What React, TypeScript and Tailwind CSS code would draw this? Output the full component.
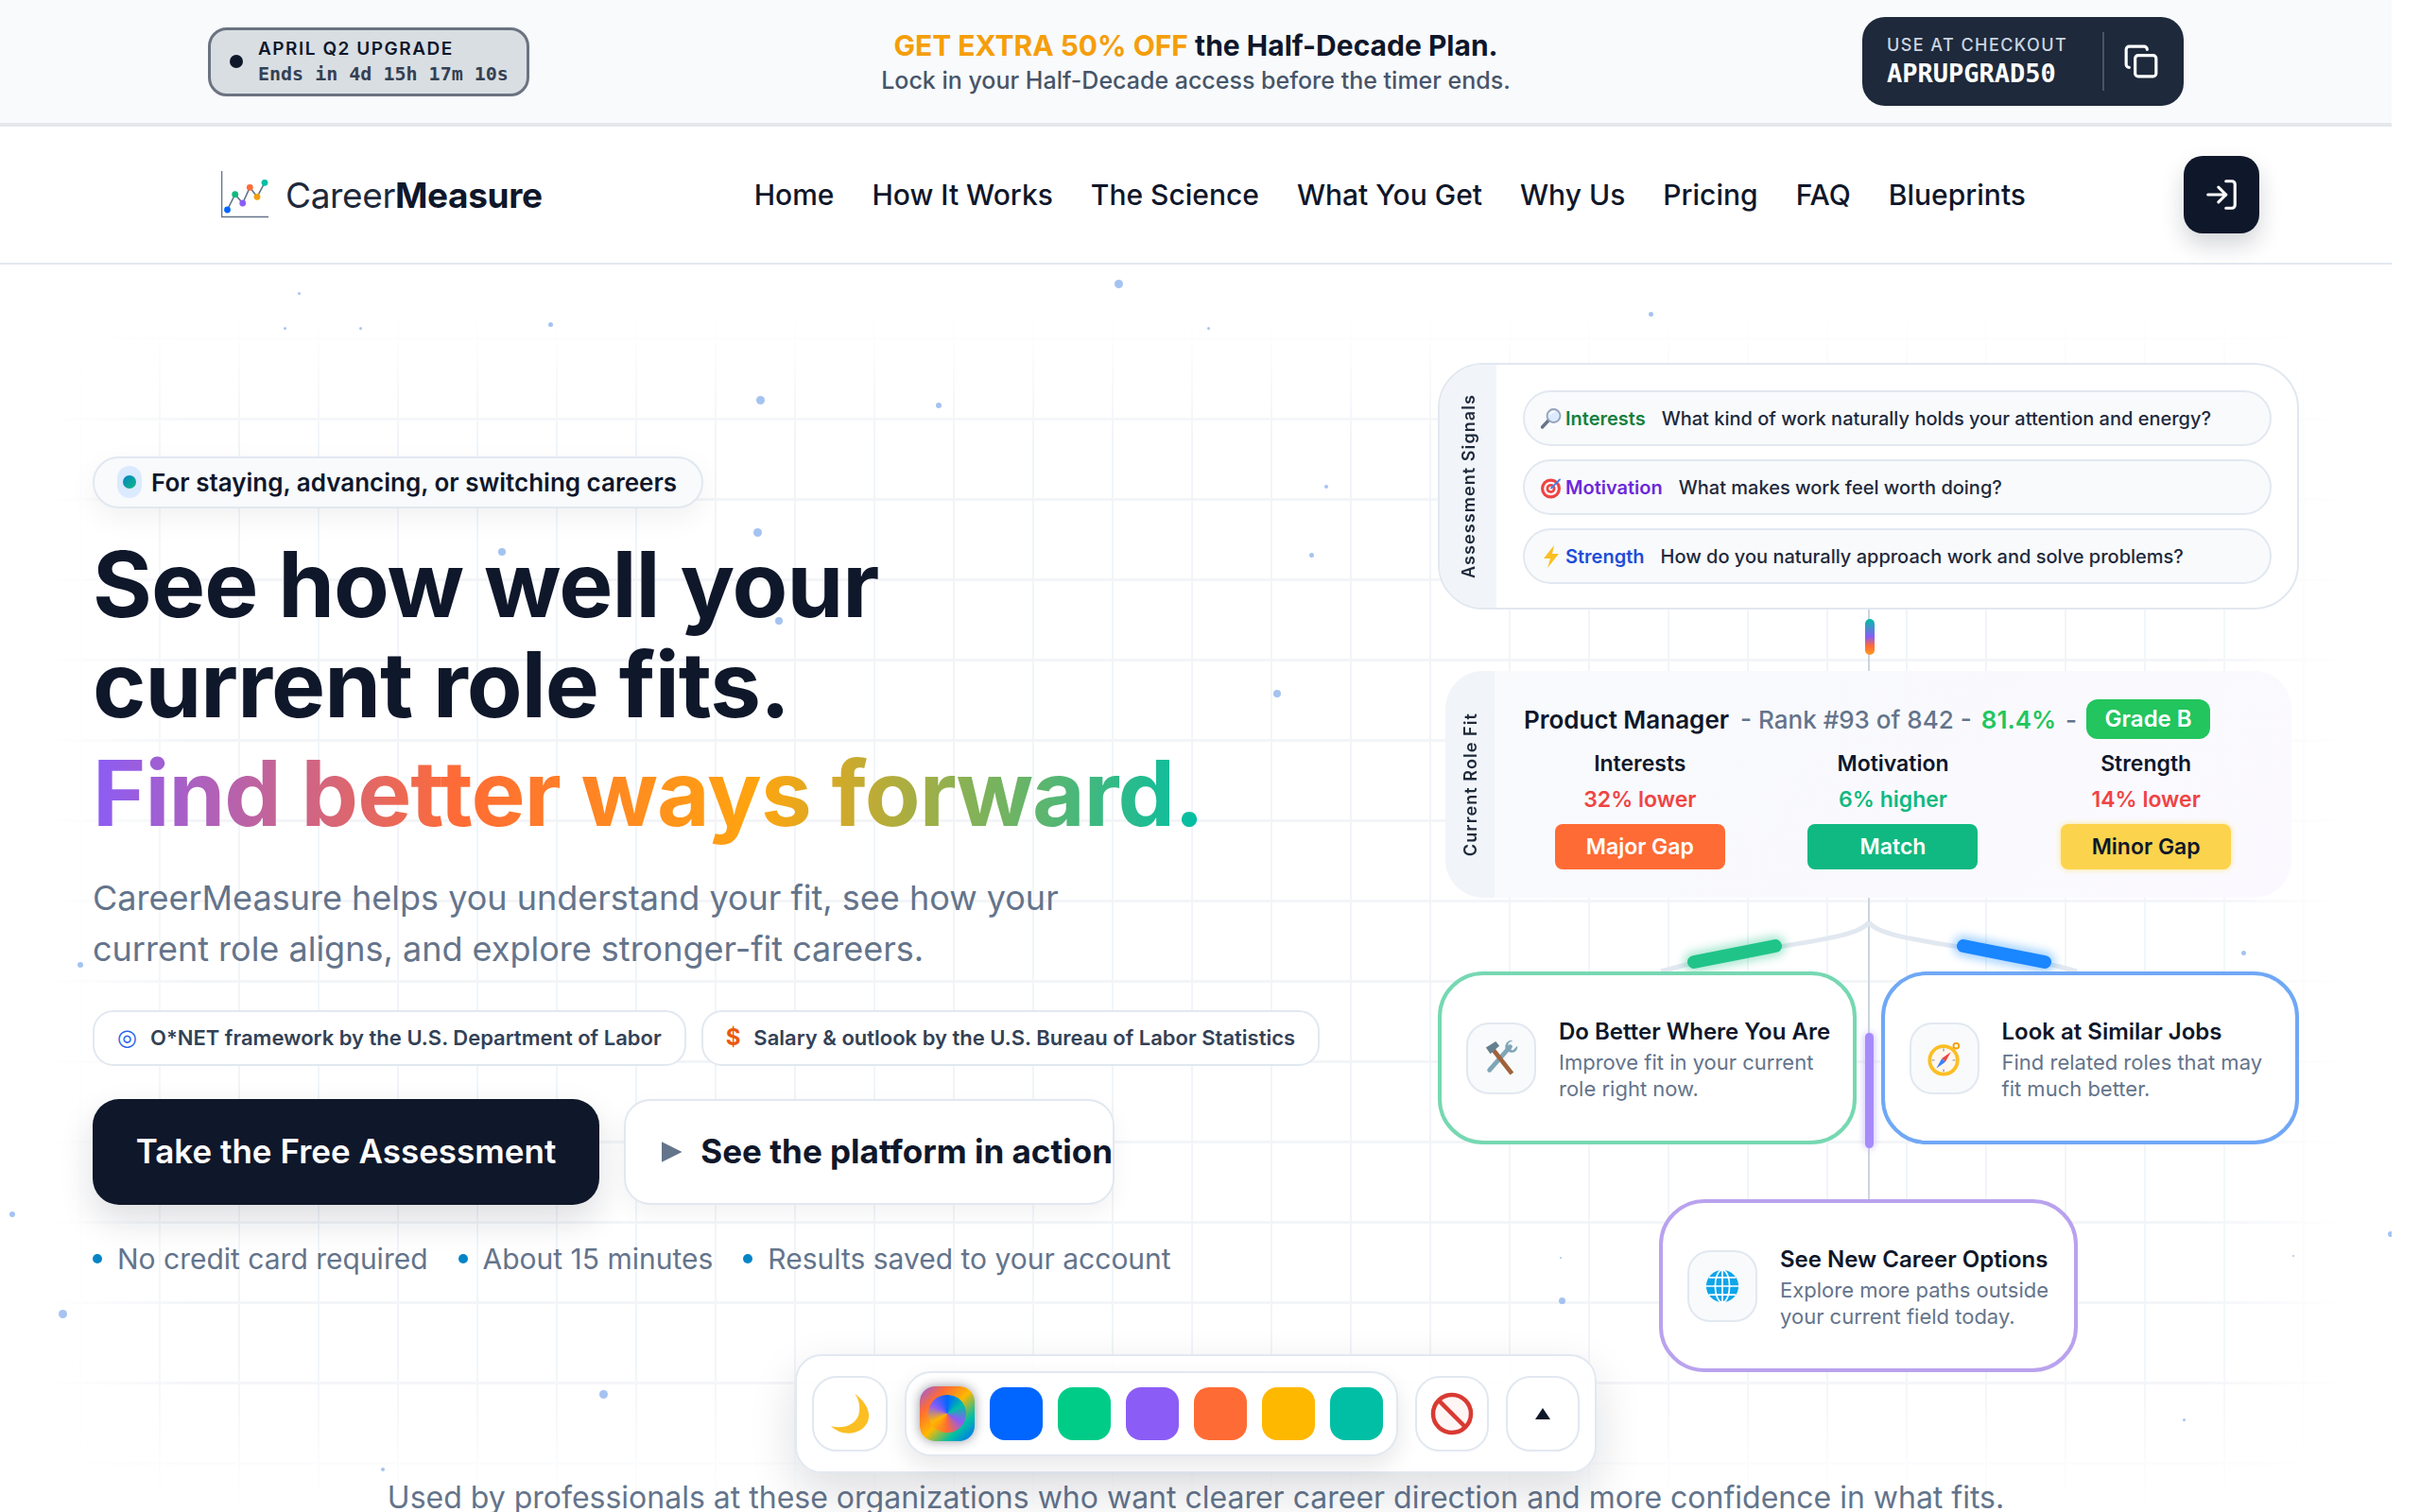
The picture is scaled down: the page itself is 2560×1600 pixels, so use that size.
import React from 'react';
import { Copy, LogIn } from 'lucide-react';

const navLinks = ['Home', 'How It Works', 'The Science', 'What You Get', 'Why Us', 'Pricing', 'FAQ', 'Blueprints'];

const particles = [
  [1179, 296, 9], [800, 419, 9], [990, 426, 6], [580, 341, 5], [797, 559, 9], [527, 580, 8], [1385, 585, 5],
  [1401, 513, 4], [1347, 730, 8], [82, 1018, 6], [820, 653, 8], [10, 1282, 6], [62, 1386, 9], [634, 1471, 9],
  [1744, 330, 5], [1277, 346, 3], [315, 309, 3], [300, 346, 3], [380, 346, 3], [2371, 1006, 5], [2309, 1501, 3],
  [2425, 1328, 2], [1649, 1373, 7], [2526, 1303, 6], [403, 1553, 4], [1650, 1330, 2],
];

const MagnifierIcon = () => (
  <svg viewBox="0 0 24 24" className="w-[24px] h-[24px] shrink-0">
    <path d="M9 14 L2.5 21" stroke="#64748b" strokeWidth="3.4" strokeLinecap="round" />
    <circle cx="14.5" cy="9" r="7" fill="#dbeafe" stroke="#94a3b8" strokeWidth="1.8" />
    <path d="M11 7 Q12.5 4.6 15.5 4.5" stroke="#ffffff" strokeWidth="1.6" fill="none" strokeLinecap="round" />
  </svg>
);

const TargetIcon = () => (
  <svg viewBox="0 0 24 24" className="w-[24px] h-[24px] shrink-0">
    <circle cx="11.5" cy="13" r="10.5" fill="#ef4444" />
    <circle cx="11.5" cy="13" r="7.3" fill="#ffffff" />
    <circle cx="11.5" cy="13" r="5" fill="#ef4444" />
    <circle cx="11.5" cy="13" r="2.2" fill="#ffffff" />
    <path d="M12 12.5 L21 3.5" stroke="#3b82f6" strokeWidth="1.8" strokeLinecap="round" />
  </svg>
);

const BoltIcon = () => (
  <svg viewBox="0 0 24 24" className="w-[24px] h-[24px] shrink-0">
    <path d="M15 0 L4 14 H11 L8 24 L20 9 H13 Z" fill="#fbbf24" />
  </svg>
);

const ToolsIcon = () => (
  <svg viewBox="0 0 40 40" className="w-[38px] h-[38px]">
    <path d="M30 7 L7 33" stroke="#7fa6b8" strokeWidth="5" strokeLinecap="round" />
    <path d="M38 6 L33 11 L28 9 L28 3 L33 0 C28 -1 23 4 25 10 L29 13 C34 15 39 11 38 6 Z" fill="#7fa6b8" />
    <path d="M10 9 L32 37" stroke="#a0623a" strokeWidth="5" strokeLinecap="butt" />
    <path d="M3 8 L14 1 L18 6 L8 15 Z" fill="#64808f" />
  </svg>
);

const CompassIcon = () => (
  <svg viewBox="0 0 40 40" className="w-[38px] h-[38px]">
    <circle cx="33" cy="6" r="3" fill="none" stroke="#f59e0b" strokeWidth="2" />
    <circle cx="19" cy="22" r="15.5" fill="#fff7ed" stroke="#fbbf24" strokeWidth="4" />
    <path d="M27 13 L21 24 L17 20 Z" fill="#ef4444" />
    <path d="M11 31 L17 20 L21 24 Z" fill="#3b82f6" />
    <path d="M19 9 V12 M19 32 V35 M6 22 H9 M29 22 H32" stroke="#94a3b8" strokeWidth="1.5" />
  </svg>
);

const GlobeIcon = () => (
  <svg viewBox="0 0 40 40" className="w-[38px] h-[38px]">
    <circle cx="20" cy="20" r="18" fill="#0ea5e9" />
    <g stroke="#ffffff" strokeWidth="1.8" fill="none">
      <ellipse cx="20" cy="20" rx="8" ry="18" />
      <path d="M20 2 V38 M2 20 H38 M5 10.5 H35 M5 29.5 H35" />
    </g>
  </svg>
);

const MoonIcon = () => (
  <svg viewBox="0 0 44 44" className="w-[45px] h-[43px]">
    <path d="M27 0 C38 8 46 20 40 32 C33 44 14 47 1 35 C14 38 27 34 31 23 C33 15 32 7 27 0 Z" fill="#fbbf24" />
  </svg>
);

const NoEntryIcon = () => (
  <svg viewBox="0 0 46 46" className="w-[46px] h-[46px]">
    <circle cx="23" cy="23" r="20" fill="#fff5f5" stroke="#d93a32" strokeWidth="4.5" />
    <path d="M9 9 L37 37" stroke="#d93a32" strokeWidth="4.5" />
  </svg>
);

const signals = [
  { icon: <MagnifierIcon />, label: 'Interests', color: 'text-[#15803d]', text: 'What kind of work naturally holds your attention and energy?' },
  { icon: <TargetIcon />, label: 'Motivation', color: 'text-[#6d28d9]', text: 'What makes work feel worth doing?' },
  { icon: <BoltIcon />, label: 'Strength', color: 'text-[#1d4ed8]', text: 'How do you naturally approach work and solve problems?' },
];

const fitColumns = [
  { title: 'Interests', delta: '32% lower', deltaColor: 'text-[#ef4444]', tag: 'Major Gap', tagClass: 'bg-[#ff6b35] text-white' },
  { title: 'Motivation', delta: '6% higher', deltaColor: 'text-[#10b981]', tag: 'Match', tagClass: 'bg-[#10b981] text-white' },
  { title: 'Strength', delta: '14% lower', deltaColor: 'text-[#ef4444]', tag: 'Minor Gap', tagClass: 'bg-[#fcd34d] text-[#0f172a] shadow-[0_0_6px_#fde68a]' },
];

const OptionCard: React.FC<{ icon: React.ReactNode; title: string; lines: string[]; border: string; className?: string }> = ({ icon, title, lines, border, className }) => (
  <div className={`relative flex items-center gap-[24px] h-[183px] pl-[26px] rounded-[48px] border-[4px] bg-white ${border} ${className ?? ''}`}>
    <div className="flex items-center justify-center w-[74px] h-[76px] shrink-0 rounded-[24px] bg-[#f8fafc] border-2 border-[#e2e8f0]">{icon}</div>
    <div className="flex flex-col">
      <h3 className="text-[24px] leading-[36px] font-semibold text-[#0f172a] whitespace-nowrap">{title}</h3>
      {lines.map((line) => (
        <p key={line} className="text-[22px] leading-[28px] text-[#64748b] whitespace-nowrap">{line}</p>
      ))}
    </div>
  </div>
);

const ThemeDock = () => (
  <div className="absolute left-1/2 -translate-x-1/2 top-[1433px] z-20 flex items-center gap-[18px] h-[126px] pl-[16px] pr-[16px] rounded-[28px] border-2 border-[#e2e8f0] bg-white/90 shadow-[0_20px_50px_rgba(15,23,42,0.14)]">
    <div className="flex items-center justify-center w-[80px] h-[80px] rounded-[26px] border-2 border-[#e2e8f0] bg-white"><MoonIcon /></div>
    <div className="flex items-center gap-[16px] h-[90px] px-[14px] rounded-[28px] border-2 border-[#e2e8f0] bg-white shadow-[0_10px_24px_rgba(15,23,42,0.1)]">
      <div className="flex items-center justify-center w-[58px] h-[58px] rounded-[16px] bg-[linear-gradient(135deg,#8b5cf6,#ff6b35,#ffb800,#00bfa5,#0066ff)] shadow-[0_0_12px_rgba(15,23,42,0.45)]">
        <div className="w-[40px] h-[40px] rounded-full bg-[conic-gradient(#0066ff,#00bfa5,#8b5cf6,#ff6b35,#ffb800,#8b5cf6,#0066ff)]" />
      </div>
      <div className="w-[56px] h-[56px] rounded-[16px] bg-[#0066ff]" />
      <div className="w-[56px] h-[56px] rounded-[16px] bg-[#00cc88]" />
      <div className="w-[56px] h-[56px] rounded-[16px] bg-[#8b5cf6]" />
      <div className="w-[56px] h-[56px] rounded-[16px] bg-[#ff6b35]" />
      <div className="w-[56px] h-[56px] rounded-[16px] bg-[#ffb800]" />
      <div className="w-[56px] h-[56px] rounded-[16px] bg-[#00bfa5]" />
    </div>
    <div className="flex items-center justify-center w-[78px] h-[80px] rounded-[26px] border-2 border-[#e2e8f0] bg-white"><NoEntryIcon /></div>
    <div className="flex items-center justify-center w-[78px] h-[80px] rounded-[26px] border-2 border-[#e2e8f0] bg-white">
      <svg viewBox="0 0 16 12" className="w-[16px] h-[12px]"><path d="M8 0 L16 12 H0 Z" fill="#0f172a" /></svg>
    </div>
  </div>
);

const BackgroundGrid = () => (
  <div className="absolute left-0 right-0 top-[280px] bottom-0 [mask-image:linear-gradient(to_right,transparent_2%,black_8%,black_92%,transparent_98%)]">
    <div className="w-full h-full bg-[linear-gradient(to_right,#f1f5f9_2px,transparent_2px),linear-gradient(to_bottom,#f3f5f8_3px,transparent_3px)] bg-[size:84px_85px] [background-position:0_77px] [mask-image:linear-gradient(to_bottom,transparent_4%,black_14%,black_88%,transparent_100%)]" />
  </div>
);

export default function App() {
  return (
    <div className="relative w-[2530px] h-[1600px] overflow-hidden bg-white font-[Inter,sans-serif] text-[#0f172a]">
      {/* promo banner */}
      <div className="flex items-center justify-between h-[134px] pl-[220px] pr-[220px] bg-[#f8fafc] border-b-4 border-[#e5e7eb]">
        <div className="flex items-center gap-[16px] w-[340px] h-[73px] pl-[20px] rounded-[20px] border-[3px] border-[#6b7280] bg-[#d9dee2]">
          <span className="w-[14px] h-[14px] rounded-full bg-[#0f172a]" />
          <div className="flex flex-col">
            <span className="text-[19px] leading-[26px] font-semibold tracking-[0.08em] text-[#0f172a] whitespace-nowrap">APRIL Q2 UPGRADE</span>
            <span className="font-['DejaVu_Sans_Mono',monospace] text-[20px] leading-[26px] font-bold text-[#334155] whitespace-nowrap">Ends in 4d 15h 17m 10s</span>
          </div>
        </div>
        <div className="flex flex-col items-center">
          <p className="text-[30px] leading-[40px] font-bold text-[#0f172a] whitespace-nowrap"><span className="text-[#f59e0b]">GET EXTRA 50% OFF</span> the Half-Decade Plan.</p>
          <p className="text-[25px] leading-[34px] font-medium text-[#475569] whitespace-nowrap">Lock in your Half-Decade access before the timer ends.</p>
        </div>
        <div className="flex items-center w-[340px] h-[94px] pl-[26px] rounded-[24px] bg-[#1e293b]">
          <div className="flex flex-col w-[228px]">
            <span className="text-[18px] leading-[26px] font-medium tracking-[0.08em] text-[#cbd5e1] whitespace-nowrap">USE AT CHECKOUT</span>
            <span className="font-['DejaVu_Sans_Mono',monospace] text-[27px] leading-[34px] font-bold text-white whitespace-nowrap">APRUPGRAD50</span>
          </div>
          <div className="w-[2px] h-[62px] bg-[#475569]" />
          <Copy size={38} className="ml-[20px] text-white" strokeWidth={2} />
        </div>
      </div>

      {/* nav */}
      <header className="flex items-center h-[146px] pl-[234px] bg-white border-b-2 border-[#e2e8f0]">
        <svg viewBox="0 0 50 50" className="w-[50px] h-[50px] shrink-0">
          <path d="M0.5 0 V48.5 H50" stroke="#64748b" strokeWidth="1.6" fill="none" />
          <path d="M6.5 41 L14.7 24.7 L22.7 34 L30.3 17.3 L38 27.3 L46 12.3" stroke="#64748b" strokeWidth="1.6" fill="none" />
          <circle cx="6.5" cy="41" r="3.4" fill="#0066ff" />
          <circle cx="14.7" cy="24.7" r="3.4" fill="#10b981" />
          <circle cx="22.7" cy="34" r="3.4" fill="#8b5cf6" />
          <circle cx="30.3" cy="17.3" r="3.4" fill="#ff6b35" />
          <circle cx="38" cy="27.3" r="3.4" fill="#f59e0b" />
          <circle cx="46" cy="12.3" r="3.4" fill="#00bfa5" />
        </svg>
        <span className="ml-[18px] text-[37px] leading-none tracking-[-0.01em] text-[#1e293b] whitespace-nowrap">Career<span className="font-bold text-[#0f172a]">Measure</span></span>
        <nav className="flex items-center gap-[40px] ml-[224px]">
          {navLinks.map((link) => (
            <a key={link} className="text-[30px] font-medium text-[#0f172a] whitespace-nowrap">{link}</a>
          ))}
        </nav>
        <button className="flex items-center justify-center w-[80px] h-[82px] ml-[167px] rounded-[20px] bg-[#0f172a] shadow-[0_12px_24px_rgba(15,23,42,0.18)]">
          <LogIn size={38} className="text-white" strokeWidth={2} />
        </button>
      </header>

      <BackgroundGrid />
      {particles.map(([x, y, size]) => (
        <span key={`${x}-${y}`} className="absolute rounded-full bg-[#8fb4ee]/80" style={{ left: x, top: y, width: size, height: size }} />
      ))}

      {/* hero */}
      <main className="relative grid grid-cols-[1fr_911px] items-center pl-[98px] pr-[98px] pt-[104px]">
        <div className="flex flex-col items-start">
          <div className="flex items-center gap-[10px] h-[55px] pl-[24px] pr-[26px] rounded-full border-2 border-[#e2e8f0] bg-[#f8fafc] shadow-[0_10px_30px_rgba(15,23,42,0.06)]">
            <span className="flex items-center justify-center w-[26px] h-[34px] rounded-full bg-[#dbeafe]">
              <span className="w-[14px] h-[14px] rounded-full bg-[linear-gradient(135deg,#0284c7,#10b981)]" />
            </span>
            <span className="text-[26px] font-semibold text-[#0f172a] whitespace-nowrap">For staying, advancing, or switching careers</span>
          </div>

          <h1 className="mt-[27px] text-[96px] leading-[106px] font-bold tracking-[-0.01em] text-[#0f172a] whitespace-nowrap">
            See how well your<br />current role fits.<br />
            <span className="inline-block mt-[6px] leading-[112px] bg-clip-text text-transparent bg-[linear-gradient(90deg,#8b5cf6,#ff6b35_33%,#ffa50f_60%,#00bfa5_100%)]">Find better ways forward.</span>
          </h1>

          <p className="mt-[28px] text-[36px] leading-[54px] text-[#64748b] whitespace-nowrap">CareerMeasure helps you understand your fit, see how your<br />current role aligns, and explore stronger-fit careers.</p>

          <div className="flex gap-[16px] mt-[38px]">
            <div className="flex items-center gap-[14px] h-[59px] px-[24px] rounded-[22px] border-2 border-[#e2e8f0] bg-white">
              <span className="text-[24px] leading-none text-[#2563eb]">◎</span>
              <span className="text-[22px] font-semibold text-[#334155] whitespace-nowrap">O*NET framework by the U.S. Department of Labor</span>
            </div>
            <div className="flex items-center gap-[14px] h-[59px] px-[24px] rounded-[22px] border-2 border-[#e2e8f0] bg-white">
              <span className="text-[24px] leading-none font-bold text-[#ea580c]">$</span>
              <span className="text-[22px] font-semibold text-[#334155] whitespace-nowrap">Salary &amp; outlook by the U.S. Bureau of Labor Statistics</span>
            </div>
          </div>

          <div className="flex gap-[26px] mt-[35px]">
            <button className="flex items-center justify-center w-[536px] h-[112px] rounded-[28px] bg-[#0f172a] text-[35px] font-semibold text-white whitespace-nowrap shadow-[0_16px_36px_rgba(15,23,42,0.14)]">Take the Free Assessment</button>
            <button className="flex items-center gap-[20px] w-[519px] h-[112px] pl-[38px] rounded-[28px] border-2 border-[#e2e8f0] bg-white text-[35px] font-bold text-[#0f172a] whitespace-nowrap shadow-[0_10px_24px_rgba(15,23,42,0.05)]">
              <svg viewBox="0 0 20 20" className="w-[22px] h-[22px]"><path d="M0 0 L20 10 L0 20 Z" fill="#64748b" /></svg>
              See the platform in action
            </button>
          </div>

          <div className="flex items-center gap-[32px] mt-[35px] text-[30px] leading-[44px] text-[#64748b]">
            {['No credit card required', 'About 15 minutes', 'Results saved to your account'].map((item) => (
              <span key={item} className="flex items-center gap-[16px] whitespace-nowrap">
                <span className="w-[10px] h-[10px] rounded-full bg-[#0284c7]" />{item}
              </span>
            ))}
          </div>
        </div>

        {/* decision flow */}
        <div className="relative flex flex-col">
          <div className="absolute left-[455px] top-[261px] w-[2px] h-[625px] bg-[#cbd5e1]" />

          <div className="relative flex h-[261px] rounded-[48px] border-2 border-[#e2e8f0] bg-white overflow-hidden">
            <div className="flex items-center justify-center w-[60px] shrink-0 bg-[#f1f5f9]">
              <span className="[writing-mode:vertical-rl] rotate-180 text-[18px] font-semibold tracking-[0.06em] text-[#1e293b] whitespace-nowrap">Assessment Signals</span>
            </div>
            <div className="flex flex-col gap-[14px] flex-1 pt-[27px] pl-[28px] pr-[27px]">
              {signals.map((row) => (
                <div key={row.label} className="flex items-center h-[59px] pl-[16px] rounded-full border-2 border-[#e2e8f0] bg-[#f8fafc] text-[20px] whitespace-nowrap">
                  {row.icon}
                  <span className={`ml-[3px] font-semibold ${row.color}`}>{row.label}</span>
                  <span className="ml-[17px] font-medium text-[#1e293b]">{row.text}</span>
                </div>
              ))}
            </div>
          </div>

          <div className="relative h-[57px]">
            <div className="absolute left-[452px] top-[10px] w-[10px] h-[38px] rounded-full bg-[linear-gradient(180deg,#00bfa5,#8b5cf6_50%,#ff6b35_75%,#ff9a1f)]" />
          </div>

          <div className="relative h-[256px] p-[8px] rounded-[48px] bg-[linear-gradient(180deg,#8b5cf6,#ff6b35)_left/60px_100%_no-repeat,linear-gradient(90deg,#00cc88,#8b5cf6_85%,#9b5cc8)]">
            <div className="flex h-full rounded-[40px] overflow-hidden bg-[#f8fafc]">
              <div className="flex items-center justify-center w-[52px] shrink-0 bg-[#f1f5f9]">
                <span className="[writing-mode:vertical-rl] rotate-180 text-[18px] font-semibold tracking-[0.06em] text-[#1e293b] whitespace-nowrap">Current Role Fit</span>
              </div>
              <div className="flex flex-col flex-1 pl-[31px] pr-[31px] pt-[30px] bg-[linear-gradient(135deg,#f8fafc,#fbf9ff)]">
                <div className="flex items-center h-[42px] text-[26px] whitespace-nowrap">
                  <span className="font-semibold text-[#0f172a]">Product Manager</span>
                  <span className="ml-[12px] font-medium text-[#64748b]">- Rank #93 of 842 -</span>
                  <span className="ml-[10px] font-semibold text-[#22c55e]">81.4%</span>
                  <span className="ml-[10px] font-medium text-[#64748b]">-</span>
                  <span className="flex items-center justify-center ml-[10px] w-[131px] h-[42px] rounded-[12px] bg-[#22c55e] text-[24px] font-semibold text-white">Grade B</span>
                </div>
                <div className="grid grid-cols-3 gap-[22px] mt-[7px]">
                  {fitColumns.map((col) => (
                    <div key={col.title} className="flex flex-col items-center">
                      <span className="text-[23px] leading-[38px] font-semibold text-[#0f172a]">{col.title}</span>
                      <span className={`text-[23px] leading-[38px] font-semibold ${col.deltaColor}`}>{col.delta}</span>
                      <span className={`flex items-center justify-center mt-[7px] w-[180px] h-[48px] rounded-[8px] text-[23px] font-semibold ${col.tagClass}`}>{col.tag}</span>
                    </div>
                  ))}
                </div>
              </div>
            </div>
          </div>

          {/* branch curves from the role card */}
          <div className="relative h-[70px]">
            <svg viewBox="0 0 911 70" className="absolute inset-0 w-full h-full overflow-visible">
              <path d="M456 18 C440 40 340 40 236 70" stroke="#e2e8f0" strokeWidth="5" fill="none" />
              <path d="M456 18 C472 40 572 40 676 70" stroke="#e2e8f0" strokeWidth="5" fill="none" />
              <path d="M271 60 L357 43" stroke="#10b981" strokeOpacity="0.35" strokeWidth="22" strokeLinecap="round" className="blur-[5px]" />
              <path d="M556 43 L642 60" stroke="#0080ff" strokeOpacity="0.35" strokeWidth="22" strokeLinecap="round" className="blur-[5px]" />
              <path d="M271 60 L357 43" stroke="#20c489" strokeWidth="14" strokeLinecap="round" />
              <path d="M556 43 L642 60" stroke="#1a86ff" strokeWidth="14" strokeLinecap="round" />
            </svg>
          </div>

          <div className="relative grid grid-cols-2 gap-[26px]">
            <OptionCard icon={<ToolsIcon />} title="Do Better Where You Are" lines={['Improve fit in your current', 'role right now.']} border="border-[#76d8b2]" />
            <OptionCard icon={<CompassIcon />} title="Look at Similar Jobs" lines={['Find related roles that may', 'fit much better.']} border="border-[#70a8f6]" />
            <div className="absolute left-[452px] top-[65px] w-[9px] h-[122px] rounded-full bg-[#a78bfa] shadow-[0_0_8px_#c4b5fd]" />
          </div>

          <div className="h-[58px]" />
          <OptionCard icon={<GlobeIcon />} title="See New Career Options" lines={['Explore more paths outside', 'your current field today.']} border="border-[#b9a2ee]" className="self-center w-[443px]" />
        </div>
      </main>

      <p className="relative mt-[113px] text-center text-[32px] leading-[40px] text-[#64748b] whitespace-nowrap">Used by professionals at these organizations who want clearer career direction and more confidence in what fits.</p>

      <ThemeDock />
    </div>
  );
}
